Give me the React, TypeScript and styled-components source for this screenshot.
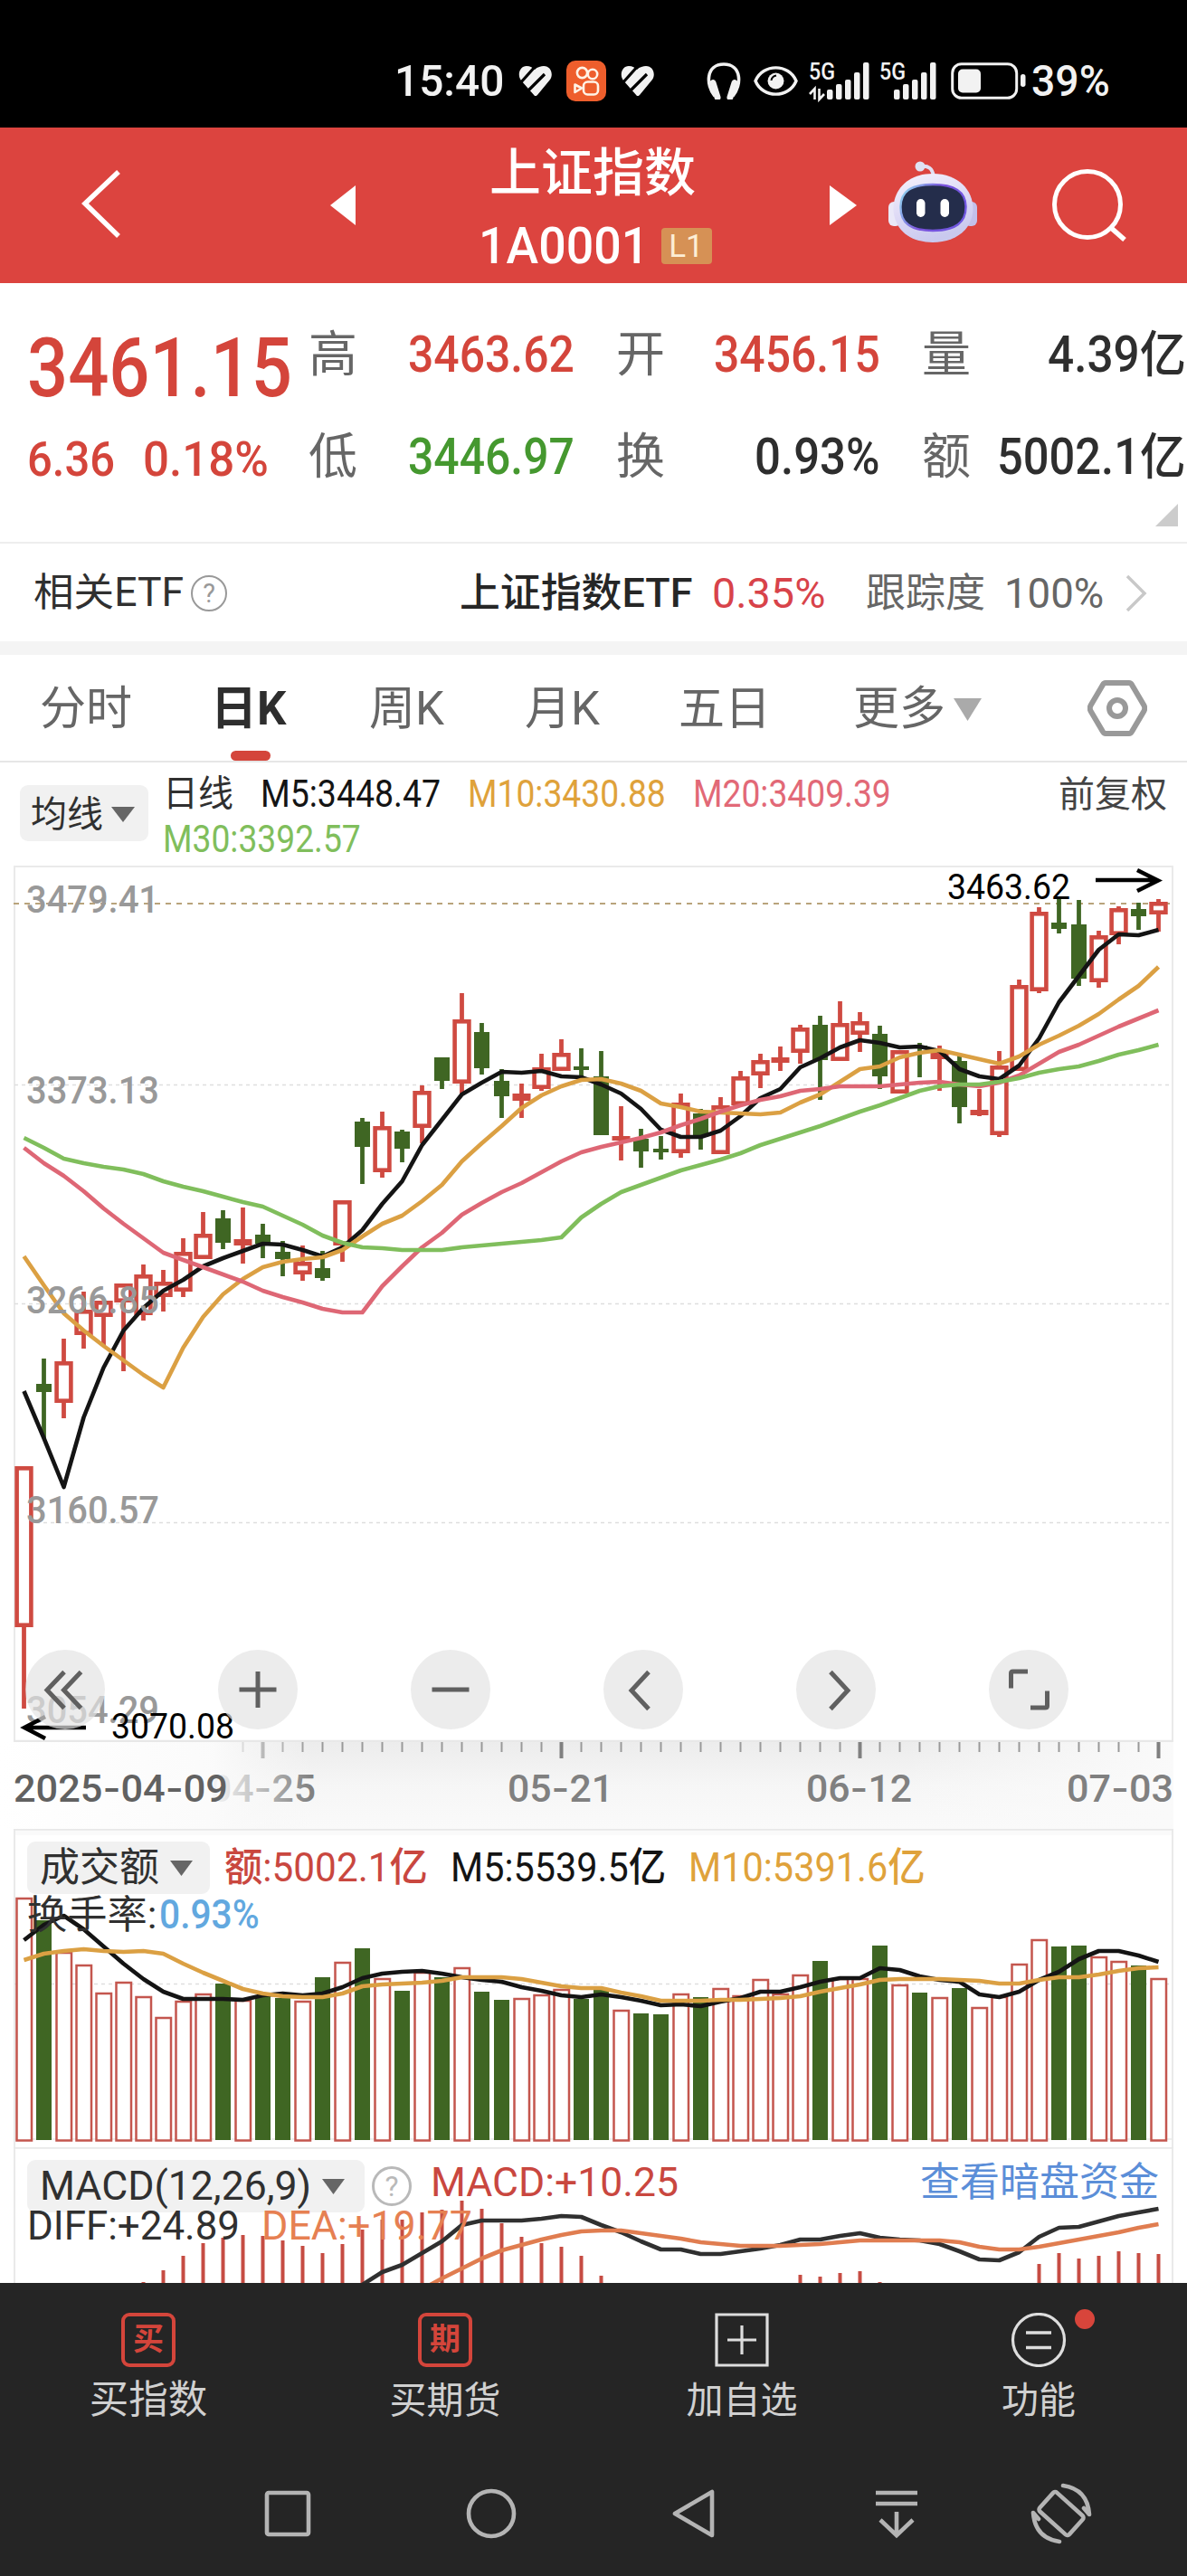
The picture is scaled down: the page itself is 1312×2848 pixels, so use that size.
import React, { useLayoutEffect, useRef, useState } from 'react';
import styled, { createGlobalStyle } from 'styled-components';

const FONT = `Roboto, 'Noto Sans CJK SC', 'Noto Sans', sans-serif`;

const RED = '#d4453b';
const UP = '#cf4a41';
const DOWN = '#3f6623';
const BLACK = '#141414';
const ORANGE = '#dba043';
const PINK = '#de6775';
const GREEN = '#80be5c';

// ---------- text squeezed to a given width ----------

interface FitProps {
  w?: number;
  size: number;
  color?: string;
  weight?: number;
  children: React.ReactNode;
}

const Fit: React.FC<FitProps> = ({ w, size, color, weight, children }) => {
  const ref = useRef<HTMLSpanElement>(null);
  const [scale, setScale] = useState(1);

  useLayoutEffect(() => {
    if (w && ref.current) {
      setScale(w / ref.current.offsetWidth);
    }
  }, [w, children]);

  return (
    <FitBox $w={w} $size={size} $color={color} $weight={weight}>
      <FitInner ref={ref} style={w ? { transform: `scaleX(${scale})` } : undefined}>
        {children}
      </FitInner>
    </FitBox>
  );
};

// ---------- data ----------

const STEP = 22;
const xAt = (i: number) => 26.5 + STEP * i;

// [high, body top, body bottom, low, up?]
const candles: [number, number, number, number, number][] = [
  [1621, 1621, 1799, 1889, 1], [1502, 1530, 1539, 1590, 0], [1480, 1505, 1551, 1568, 1],
  [1428, 1448, 1476, 1491, 1], [1438, 1438, 1456, 1488, 1], [1419, 1419, 1440, 1516, 1],
  [1398, 1409, 1454, 1460, 1], [1404, 1417, 1434, 1450, 1], [1369, 1384, 1428, 1434, 1],
  [1340, 1364, 1392, 1392, 1], [1338, 1347, 1374, 1381, 0], [1335, 1370, 1377, 1397, 1],
  [1353, 1365, 1375, 1391, 0], [1372, 1384, 1392, 1411, 0], [1377, 1395, 1409, 1416, 1],
  [1383, 1402, 1413, 1416, 0], [1327, 1327, 1377, 1395, 1], [1236, 1240, 1268, 1309, 0],
  [1229, 1245, 1296, 1302, 1], [1249, 1251, 1270, 1285, 0], [1200, 1206, 1247, 1264, 1],
  [1169, 1169, 1195, 1204, 0], [1098, 1127, 1198, 1209, 1], [1131, 1141, 1181, 1188, 0],
  [1182, 1195, 1212, 1236, 0], [1198, 1209, 1217, 1236, 1], [1165, 1180, 1204, 1206, 1],
  [1149, 1164, 1184, 1184, 1], [1159, 1179, 1183, 1190, 0], [1162, 1190, 1255, 1255, 0],
  [1223, 1256, 1261, 1283, 1], [1248, 1259, 1273, 1291, 0], [1256, 1270, 1274, 1282, 0],
  [1209, 1219, 1275, 1280, 1], [1226, 1231, 1257, 1271, 0], [1213, 1222, 1276, 1276, 1],
  [1184, 1190, 1222, 1222, 1], [1165, 1172, 1189, 1203, 1], [1157, 1169, 1175, 1184, 1],
  [1133, 1136, 1164, 1176, 1], [1123, 1133, 1172, 1216, 0], [1107, 1131, 1173, 1173, 1],
  [1119, 1129, 1144, 1163, 1], [1134, 1143, 1190, 1204, 0], [1161, 1161, 1209, 1209, 1],
  [1153, 1156, 1159, 1191, 0], [1156, 1164, 1171, 1206, 1], [1167, 1173, 1224, 1242, 0],
  [1204, 1227, 1233, 1234, 1], [1162, 1178, 1255, 1257, 1], [1083, 1089, 1184, 1184, 1],
  [1003, 1008, 1096, 1098, 1], [994, 1020, 1027, 1032, 0], [995, 1022, 1082, 1090, 0],
  [1029, 1034, 1086, 1092, 1], [1002, 1004, 1034, 1044, 1], [998, 1005, 1013, 1028, 0],
  [994, 997, 1011, 1030, 1],
];

const ma5 = [
  1538, 1590, 1644, 1567, 1512, 1471, 1446, 1427, 1415, 1400, 1391, 1383, 1375, 1376, 1382, 1389, 1379, 1360, 1331, 1306,
  1266, 1238, 1210, 1197, 1185, 1186, 1184, 1190, 1191, 1199, 1209, 1226, 1249, 1257, 1257, 1250, 1234, 1214, 1204, 1180,
  1170, 1158, 1150, 1153, 1158, 1157, 1162, 1182, 1190, 1193, 1178, 1148, 1108, 1079, 1050, 1033, 1034, 1028,
];
const ma10 = [
  1389, 1421, 1452, 1471, 1488, 1504, 1520, 1534, 1490, 1456, 1431, 1414, 1401, 1395, 1392, 1390, 1382, 1367, 1353, 1344,
  1328, 1310, 1284, 1264, 1245, 1225, 1211, 1201, 1194, 1193, 1198, 1206, 1220, 1224, 1229, 1230, 1231, 1232, 1230, 1219,
  1210, 1196, 1182, 1179, 1169, 1164, 1161, 1166, 1171, 1176, 1168, 1155, 1145, 1134, 1121, 1105, 1090, 1069,
];
const ma20 = [
  1269, 1286, 1300, 1317, 1336, 1353, 1369, 1385, 1393, 1401, 1409, 1417, 1427, 1434, 1440, 1447, 1451, 1451, 1422, 1400,
  1379, 1363, 1343, 1330, 1318, 1308, 1296, 1284, 1274, 1268, 1263, 1258, 1252, 1244, 1237, 1229, 1222, 1216, 1212, 1206,
  1204, 1201, 1201, 1201, 1199, 1197, 1196, 1199, 1201, 1197, 1189, 1176, 1163, 1155, 1145, 1135, 1126, 1117,
];
const ma30 = [
  1258, 1269, 1281, 1286, 1290, 1293, 1298, 1306, 1312, 1317, 1323, 1329, 1334, 1344, 1354, 1366, 1374, 1379, 1380, 1382,
  1382, 1382, 1379, 1377, 1375, 1373, 1371, 1368, 1346, 1331, 1318, 1310, 1302, 1294, 1288, 1282, 1275, 1266, 1259, 1252,
  1245, 1237, 1229, 1222, 1214, 1206, 1201, 1199, 1199, 1196, 1192, 1186, 1182, 1179, 1173, 1166, 1161, 1155,
];

const volTops = [
  2098, 2123, 2158, 2172, 2203, 2191, 2207, 2230, 2212, 2204, 2193, 2211, 2207, 2209, 2212, 2186, 2169, 2154, 2187, 2201,
  2180, 2186, 2175, 2202, 2211, 2209, 2205, 2199, 2210, 2199, 2222, 2226, 2227, 2204, 2208, 2198, 2206, 2188, 2204, 2183,
  2168, 2187, 2187, 2151, 2194, 2203, 2208, 2198, 2219, 2207, 2171, 2144, 2152, 2151, 2163, 2168, 2173, 2187,
];
const vol5 = [
  2145, 2128, 2118, 2133, 2152, 2171, 2188, 2202, 2210, 2210, 2210, 2211, 2206, 2204, 2206, 2204, 2197, 2187, 2182, 2180,
  2179, 2182, 2186, 2189, 2191, 2197, 2201, 2206, 2208, 2205, 2208, 2212, 2217, 2216, 2218, 2213, 2209, 2202, 2202, 2197,
  2191, 2187, 2187, 2176, 2178, 2185, 2189, 2191, 2205, 2208, 2202, 2189, 2180, 2166, 2157, 2157, 2162, 2169,
];
const vol10 = [
  2167, 2160, 2157, 2155, 2157, 2158, 2157, 2160, 2171, 2181, 2190, 2199, 2204, 2207, 2208, 2208, 2204, 2196, 2194, 2193,
  2192, 2190, 2186, 2186, 2186, 2188, 2192, 2196, 2198, 2198, 2203, 2207, 2212, 2212, 2212, 2211, 2211, 2210, 2209, 2207,
  2202, 2198, 2194, 2189, 2188, 2188, 2188, 2189, 2190, 2193, 2193, 2189, 2186, 2186, 2183, 2179, 2176, 2175,
];

const macdBars: Record<number, number> = {
  6: 2523, 7: 2510, 8: 2494, 9: 2480, 10: 2474, 11: 2471, 12: 2472, 13: 2477, 14: 2483, 15: 2491, 16: 2481, 17: 2465,
  18: 2454, 19: 2454, 20: 2446, 21: 2443, 22: 2433, 23: 2442, 24: 2458, 25: 2473, 26: 2480, 27: 2484, 28: 2494, 29: 2516,
  39: 2515, 40: 2517, 41: 2513, 42: 2511, 43: 2523, 51: 2503, 52: 2491, 53: 2497, 54: 2494, 55: 2489, 56: 2491, 57: 2492,
};
const diff = [
  2526, 2512, 2504, 2491, 2478, 2460, 2455, 2455, 2455, 2453, 2450, 2451, 2460, 2468, 2478, 2487, 2487, 2492, 2492, 2489,
  2486, 2482, 2476, 2476, 2472, 2469, 2474, 2476, 2477, 2481, 2489, 2498, 2499, 2490, 2473, 2463, 2462, 2456, 2450, 2446,
  2442,
];
const dea = [
  2531, 2519, 2508, 2497, 2488, 2482, 2476, 2471, 2467, 2466, 2466, 2469, 2472, 2475, 2479, 2481, 2483, 2483, 2483, 2482,
  2481, 2479, 2477, 2477, 2477, 2477, 2477, 2479, 2484, 2487, 2487, 2484, 2480, 2476, 2472, 2468, 2463, 2459,
];

const toPoints = (ys: number[], from = 0) => ys.map((y, i) => `${xAt(i + from)},${y}`).join(' ');

const Curve = ({ ys, color, from = 0 }: { ys: number[]; color: string; from?: number }) => (
  <polyline points={toPoints(ys, from)} fill="none" stroke={color} strokeWidth="4.600" strokeLinejoin="round" />
);

// ---------- icons ----------

const HeartIcon = () => (
  <svg width="37" height="33" viewBox="0 0 37 33">
    <path d="M18 33 L3 16 C-2 9 2 0 9 0 C13 0 16 2 18 4 C21 1 25 0 28 0 C36 0 39 9 35 15 L21 32 Q19 34 18 33Z" fill="#f2f2f2" />
    <path d="M19 0 L2 19 M29 9 L9 29" stroke="#000" strokeWidth="3.200" />
  </svg>
);

const VideoAppIcon = () => (
  <svg width="44" height="45" viewBox="0 0 44 45">
    <rect width="44" height="45" rx="10" fill="#ee5e2c" />
    <g fill="none" stroke="#fff3e6" strokeWidth="2.6">
      <circle cx="17.5" cy="13.5" r="5.6" />
      <circle cx="29" cy="15" r="5.2" />
      <rect x="19" y="23.5" width="16" height="14" rx="4.5" />
      <path d="M9.5 26.5 L17 30.5 L9.5 35Z" strokeLinejoin="round" />
    </g>
  </svg>
);

const HeadphoneIcon = () => (
  <svg width="38" height="41" viewBox="0 0 38 41">
    <path d="M9 37 C-1 25 -1 2 19 2 C39 2 39 25 29 37" fill="none" stroke="#f2f2f2" strokeWidth="3.6" />
    <path d="M7 24 L12 40 M31 24 L26 40" stroke="#f2f2f2" strokeWidth="7" strokeLinecap="round" transform="translate(0 -1.5)" />
  </svg>
);

const EyeIcon = () => (
  <svg width="49" height="33" viewBox="0 0 49 33">
    <path d="M2 16.500 C10 -3 39 -3 47 16.500 C39 36 10 36 2 16.500Z" fill="none" stroke="#f2f2f2" strokeWidth="3.4" />
    <circle cx="24.500" cy="16.500" r="9" fill="#f2f2f2" />
    <path d="M19.500 16 Q20 11.500 25 10.500" fill="none" stroke="#000" strokeWidth="2" />
  </svg>
);

const SignalIcon = ({ arrows }: { arrows?: boolean }) => {
  const off = arrows ? 19 : 15;
  return (
    <svg width={arrows ? 66 : 62} height="41" viewBox={`0 0 ${arrows ? 66 : 62} 41`} overflow="visible">
      <text x="-1" y="19" fontFamily="Roboto" fontWeight="500" fontSize="26" fill="#f2f2f2" textLength="29" lengthAdjust="spacingAndGlyphs">5G</text>
      {[30, 24, 19, 11, 0].map((t, i) => (
        <rect key={i} x={off + i * 10} y={t} width="6.500" height={41 - t} rx="2" fill="#f2f2f2" />
      ))}
      {arrows && <path d="M0 35 L5.500 29 V41 M16 35 L10.500 41 V29" fill="none" stroke="#f2f2f2" strokeWidth="2.600" />}
    </svg>
  );
};

const BatteryIcon = () => (
  <svg width="83" height="41" viewBox="0 0 83 41">
    <rect x="1.700" y="1.700" width="71" height="37.600" rx="10" fill="none" stroke="#f2f2f2" strokeWidth="3" />
    <rect x="8" y="7.500" width="25" height="26" rx="5" fill="#f2f2f2" />
    <rect x="77" y="13" width="5.500" height="14" rx="2.700" fill="#f2f2f2" />
  </svg>
);

const RobotIcon = () => (
  <svg width="98" height="90" viewBox="0 0 98 90">
    <defs>
      <linearGradient id="shell" x1="0" y1="0" x2="0.4" y2="1">
        <stop offset="0" stopColor="#f6f3fd" />
        <stop offset="0.6" stopColor="#dcd8f5" />
        <stop offset="1" stopColor="#c9c9ee" />
      </linearGradient>
      <linearGradient id="glow" x1="0" y1="0.2" x2="1" y2="0.6">
        <stop offset="0" stopColor="#8fd0ee" />
        <stop offset="0.5" stopColor="#7a52dc" />
        <stop offset="1" stopColor="#6f57e0" />
      </linearGradient>
    </defs>
    <path d="M36 6 Q48 4 50 17" fill="none" stroke="#e2e0f3" strokeWidth="4" />
    <circle cx="35" cy="6" r="5.500" fill="#dfe3f4" />
    <rect x="0" y="45" width="14" height="27" rx="6" fill="#eae8f8" />
    <rect x="84" y="45" width="14" height="27" rx="6" fill="#c3c0ea" />
    <path d="M49 14 C78 14 94 33 93.500 54 C92 78 72 90 49 90 C26 90 7 78 5.500 54 C5 33 20 14 49 14Z" fill="url(#shell)" />
    <path d="M49 26 C74 26 85 34 85.500 50 C86 68 74 77 49 77 C24 77 13 68 13.500 50 C14 34 24 26 49 26Z" fill="#242d4b" stroke="url(#glow)" strokeWidth="2.400" />
    <rect x="31" y="42" width="9.500" height="20" rx="4.700" fill="#fff" />
    <rect x="57.500" y="42" width="9.500" height="20" rx="4.700" fill="#fff" />
  </svg>
);

const SearchIcon = () => (
  <svg width="84" height="80" viewBox="0 0 84 80">
    <circle cx="39" cy="39" r="36.500" fill="none" stroke="#fff" strokeWidth="5" />
    <path d="M64 64 L80 78" stroke="#fff" strokeWidth="5.500" />
  </svg>
);

const HelpIcon = ({ r, color, stroke }: { r: number; color: string; stroke: number }) => (
  <svg width={r * 2} height={r * 2} viewBox={`0 0 ${r * 2} ${r * 2}`}>
    <circle cx={r} cy={r} r={r - stroke / 2} fill="none" stroke={color} strokeWidth={stroke} />
    <text x={r} y={r * 1.5} textAnchor="middle" fontFamily="Roboto" fontSize={r * 1.45} fill={color}>?</text>
  </svg>
);

const Caret = ({ w, h, color }: { w: number; h: number; color: string }) => (
  <svg width={w} height={h} viewBox="0 0 10 10" preserveAspectRatio="none">
    <path d="M0 0 H10 L5 10Z" fill={color} />
  </svg>
);

const HexIcon = () => (
  <svg width="66" height="64" viewBox="0 0 66 64">
    <path d="M20 4 H46 Q48 4 49 6 L62.500 29 Q64 32 62.500 35 L49 58 Q48 60 46 60 H20 Q18 60 17 58 L3.500 35 Q2 32 3.500 29 L17 6 Q18 4 20 4Z" fill="none" stroke="#999" strokeWidth="6" />
    <circle cx="33" cy="32" r="9" fill="none" stroke="#999" strokeWidth="6" />
  </svg>
);

const ToolIcon = ({ d }: { d: string }) => (
  <svg width="88" height="88" viewBox="0 0 88 88">
    <path d={d} fill="none" stroke="#606060" strokeWidth="5" />
  </svg>
);

const toolIcons = [
  'M43 24.500 L24 44.500 L43 64.500 M61.500 24.500 L42.500 44.500 L61.500 64.500',
  'M44 24 V64 M23.500 44 H64.500',
  'M23.500 44 H64.500',
  'M50 24.500 L31 45 L50 65.500',
  'M38 24.500 L57 45 L38 65.500',
  'M24.500 42.500 V26 Q24.500 24 26.500 24 H43 M46 64 H62 Q64.500 64 64.500 62 V45.500',
];

// ---------- chart blocks ----------

const priceLabels: [number, string][] = [
  [1009, '3479.41'], [1220, '3373.13'], [1452, '3266.85'], [1684, '3160.57'], [1905, '3054.29'],
];

const CandleChart = () => (
  <svg width="1312" height="969" viewBox="0 957 1312 969" fontFamily={FONT}>
    <path d="M16 1926 V958 H1296 V1926" fill="none" stroke="#eaeaea" strokeWidth="2" />
    <path d="M15 1925 H1297" stroke="#e8e8e8" strokeWidth="2.500" />
    {[1199.5, 1441.5, 1683.5].map((y) => (
      <path key={y} d={`M16 ${y} H1296`} stroke="#dedede" strokeWidth="1.300" strokeDasharray="4 4" />
    ))}
    <path d="M15 999 H1296" stroke="#b9a47c" strokeWidth="2" strokeDasharray="6 6" />
    {candles.map(([hi, top, bot, lo, up], i) => {
      const x = xAt(i);
      const hollow = up && bot - top > 9;
      return (
        <g key={i} fill={up ? UP : DOWN}>
          {hi < top && <rect x={x - 2.4} y={hi} width="4.800" height={top - hi + 1} />}
          {lo > bot && <rect x={x - 2.4} y={bot - 1} width="4.800" height={lo - bot + 1} />}
          {hollow ? (
            <rect x={x - 7.9} y={top + 2.3} width="15.800" height={bot - top - 4.6} fill="#fff" stroke={UP} strokeWidth="4.600" />
          ) : (
            <rect x={x - (up ? 10 : 8.5)} y={top} width={up ? 20 : 17} height={bot - top} />
          )}
        </g>
      );
    })}
    <Curve ys={ma5} color={BLACK} />
    <Curve ys={ma10} color={ORANGE} />
    <Curve ys={ma20} color={PINK} />
    <Curve ys={ma30} color={GREEN} />
    {priceLabels.map(([y, t]) => (
      <text key={t} x="29" y={y} fontSize="43" fontWeight="500" fill="#999" textLength="147" lengthAdjust="spacingAndGlyphs">{t}</text>
    ))}
    <text x="1047" y="994" fontSize="38" textLength="136" lengthAdjust="spacingAndGlyphs">3463.62</text>
    <path d="M1211 973 H1279 M1257 962 L1280 973.500 L1257 985" fill="none" stroke="#000" strokeWidth="4.500" />
    <text x="123" y="1922" fontSize="38" textLength="136" lengthAdjust="spacingAndGlyphs">3070.08</text>
    <path d="M95 1910 H28 M50 1898 L27 1910 L50 1922" fill="none" stroke="#000" strokeWidth="4.500" />
  </svg>
);

// Roboto's hyphen is short, Inter's sits closer to the digit width
const AxisDate = ({ x, w, color, children }: { x: number; w: number; color: string; children: string }) => (
  <text x={x} y="65.500" fontSize="43" fontWeight="500" fill={color} textLength={w} lengthAdjust="spacingAndGlyphs">
    {children.split(/(-)/).map((p, i) => (
      <tspan key={i} fontFamily={p === '-' ? 'Inter' : 'Roboto'}>{p}</tspan>
    ))}
  </text>
);

const TimeAxis = () => (
  <svg width="1312" height="96" viewBox="0 0 1312 96">
    <defs>
      <linearGradient id="axisBg" x1="0" y1="0" x2="0" y2="1">
        <stop offset="0" stopColor="#ececec" />
        <stop offset="0.5" stopColor="#f6f6f6" />
        <stop offset="1" stopColor="#fafafa" />
      </linearGradient>
      <linearGradient id="axisFade" x1="0" y1="0" x2="1" y2="0">
        <stop offset="0" stopColor="#fff" />
        <stop offset="0.68" stopColor="#fbfbfb" stopOpacity="0.97" />
        <stop offset="1" stopColor="#f6f6f6" stopOpacity="0" />
      </linearGradient>
      <linearGradient id="axisRight" x1="0" y1="0" x2="1" y2="0">
        <stop offset="0" stopColor="#fafafa" stopOpacity="0" />
        <stop offset="1" stopColor="#fafafa" />
      </linearGradient>
    </defs>
    <rect x="15" y="0" width="1282" height="96" fill="url(#axisBg)" />
    <rect x="1000" y="0" width="297" height="96" fill="url(#axisRight)" />
    {candles.map((_, i) => {
      if (i < 11) return null;
      const major = i % 15 === 12;
      return major ? (
        <rect key={i} x={xAt(i) - 2} y="0" width="4" height="18" fill="#808080" />
      ) : (
        <rect key={i} x={xAt(i) - 1} y="0" width="2" height="11" fill="#999" />
      );
    })}
    <AxisDate x={232} w={117} color="#808080">04-25</AxisDate>
    <rect x="0" y="0" width="345" height="96" fill="url(#axisFade)" />
    <AxisDate x={561} w={117} color="#808080">05-21</AxisDate>
    <AxisDate x={891} w={117} color="#808080">06-12</AxisDate>
    <AxisDate x={1179} w={118} color="#808080">07-03</AxisDate>
    <AxisDate x={15} w={237} color="#616161">2025-04-09</AxisDate>
  </svg>
);

const VolumeChart = () => (
  <svg width="1312" height="352" viewBox="0 2022 1312 352">
    <rect x="16" y="2022" width="1280" height="7" fill="#fafafa" />
    <path d="M16 2374 V2022 M1296 2022 V2374" stroke="#eaeaea" strokeWidth="2" />
    <path d="M15 2022.500 H1297" stroke="#e8e8e8" strokeWidth="2.500" />
    <path d="M16 2365 H1296" stroke="#eaeaea" strokeWidth="1.500" />
    <path d="M16 2193.500 H1296" stroke="#dedede" strokeWidth="1.300" strokeDasharray="4 4" />
    {volTops.map((y, i) =>
      candles[i][4] ? (
        <rect key={i} x={xAt(i) - 8} y={y + 1} width="16.500" height={2365.5 - y} fill="#fff" stroke="#c4564e" strokeWidth="2.500" />
      ) : (
        <rect key={i} x={xAt(i) - 8.5} y={y} width="17" height={2366 - y} fill={DOWN} />
      )
    )}
    <Curve ys={vol5} color={BLACK} />
    <Curve ys={vol10} color={ORANGE} />
  </svg>
);

const MacdChart = () => (
  <svg width="1312" height="150" viewBox="0 2374 1312 150">
    <path d="M16 2524 V2374 M1296 2374 V2524" stroke="#eaeaea" strokeWidth="2" />
    <path d="M15 2374.500 H1297" stroke="#e8e8e8" strokeWidth="2.500" />
    {Object.entries(macdBars).map(([i, y]) => (
      <rect key={i} x={xAt(+i) - 2} y={y} width="4" height={2524 - y} fill="#c64c43" />
    ))}
    <Curve ys={diff} from={17} color="#303030" />
    <Curve ys={dea} from={20} color="#e07d50" />
  </svg>
);

const sysIcons = [
  <rect key="sq" x="12" y="12" width="46" height="46" rx="2" />,
  <circle key="ci" cx="35" cy="35" r="25" />,
  <path key="tr" d="M55 11 V59 L14 35Z" strokeLinejoin="round" />,
  <path key="dn" d="M12 12 H58 M12 24 H58 M35 33 V58 M17 42 L35 59 L53 42" />,
  <g key="ro">
    <rect x="13" y="21" width="44" height="28" rx="3" transform="rotate(42 35 35)" />
    <path d="M37 4 Q64 8 66 36 L60 29 M33 66 Q6 62 4 34 L10 41" strokeLinecap="round" strokeLinejoin="round" />
  </g>,
];

// ---------- page ----------

export default function App() {
  return (
    <Screen>
      <GlobalStyle />

      <StatusBar>
        <Fit size={49} w={121} weight={500} color="#f2f2f2">15:40</Fit>
        <StatusApps>
          <HeartIcon />
          <VideoAppIcon />
          <HeartIcon />
        </StatusApps>
        <HeadphoneIcon />
        <EyeIcon />
        <SignalIcon arrows />
        <SignalIcon />
        <BatteryIcon />
        <Fit size={49} w={87} weight={500} color="#f2f2f2">39%</Fit>
      </StatusBar>

      <Header>
        <svg width="44" height="78" viewBox="0 0 44 78">
          <path d="M41 2 L4 37 L41 73" fill="none" stroke="#fff" strokeWidth="5.500" />
        </svg>
        <svg width="28" height="44" viewBox="0 0 28 44"><path d="M28 0 V44 L0 22Z" fill="#fff" /></svg>
        <TitleBlock>
          <Fit size={57} weight={500} color="#fff">上证指数</Fit>
          <CodeRow>
            <Fit size={56} w={188} weight={500} color="#fff">1A0001</Fit>
            <Badge>L1</Badge>
          </CodeRow>
        </TitleBlock>
        <svg width="30" height="44" viewBox="0 0 30 44"><path d="M0 0 V44 L30 22Z" fill="#fff" /></svg>
        <RobotIcon />
        <SearchIcon />
      </Header>

      <Quote>
        <BigPrice><Fit size={90} w={293} weight={500} color={RED}>3461.15</Fit></BigPrice>
        <Pair><Fit size={54} color="#666">高</Fit><Fit size={55} w={184} weight={500} color={RED}>3463.62</Fit></Pair>
        <Pair><Fit size={54} color="#666">开</Fit><Fit size={55} w={184} weight={500} color={RED}>3456.15</Fit></Pair>
        <Pair><Fit size={54} color="#666">量</Fit><Fit size={55} w={153} weight={500} color="#2e2e2e">4.39亿</Fit></Pair>
        <Change>
          <Fit size={54} w={97} weight={500} color={RED}>6.36</Fit>
          <Fit size={54} w={139} weight={500} color={RED}>0.18%</Fit>
        </Change>
        <Pair><Fit size={54} color="#666">低</Fit><Fit size={55} w={184} weight={500} color="#45982f">3446.97</Fit></Pair>
        <Pair><Fit size={54} color="#666">换</Fit><Fit size={55} w={139} weight={500} color="#2e2e2e">0.93%</Fit></Pair>
        <Pair><Fit size={54} color="#666">额</Fit><Fit size={55} w={209} weight={500} color="#2e2e2e">5002.1亿</Fit></Pair>
        <Corner />
      </Quote>

      <EtfRow>
        <EtfLeft>
          <Fit size={43.5} w={166} color="#303030">相关ETF</Fit>
          <HelpIcon r={20} color="#999" stroke={2} />
        </EtfLeft>
        <EtfRight>
          <Fit size={44} w={257} weight={500} color="#262626">上证指数ETF</Fit>
          <Fit size={46} w={125} color="#d8434a">0.35%</Fit>
          <Track>
            <Fit size={44} color="#666">跟踪度</Fit>
            <Fit size={46} w={110} color="#666">100%</Fit>
          </Track>
          <svg width="24" height="40" viewBox="0 0 24 40">
            <path d="M2 1 L21 20 L2 39" fill="none" stroke="#c8c8c8" strokeWidth="3.500" />
          </svg>
        </EtfRight>
      </EtfRow>

      <Tabs>
        <Tab>分时</Tab>
        <Tab $active>日K</Tab>
        <Tab>周K</Tab>
        <Tab>月K</Tab>
        <Tab>五日</Tab>
        <Tab>更多<Caret w={31} h={25} color="#aaa" /></Tab>
        <HexIcon />
      </Tabs>

      <MaBar>
        <MaButton>均线<Caret w={26} h={17} color="#666" /></MaButton>
        <MaLegend>
          <Fit size={40} w={78} color="#303030">日线</Fit>
          <Fit size={42} w={199} weight={450} color={BLACK}>M5:3448.47</Fit>
          <Fit size={42} w={219} weight={450} color="#dfa23b">M10:3430.88</Fit>
          <Fit size={42} w={219} weight={450} color="#e26977">M20:3409.39</Fit>
          <Fit size={42} w={219} weight={450} color={GREEN}>M30:3392.57</Fit>
        </MaLegend>
        <Adjust>前复权</Adjust>
      </MaBar>

      <ChartArea>
        <CandleChart />
        <Tools>
          {toolIcons.map((d) => (
            <ToolButton key={d}><ToolIcon d={d} /></ToolButton>
          ))}
        </Tools>
      </ChartArea>
      <TimeAxis />

      <Panel $h={352}>
        <PanelBack><VolumeChart /></PanelBack>
        <PanelHead>
          <PanelButton $w={202}><Fit size={44} color="#303030">成交额</Fit><Caret w={25} h={17} color="#666" /></PanelButton>
          <Values>
            <Fit size={44} w={225} weight={450} color="#c9473f">额:5002.1亿</Fit>
            <Fit size={44} w={238} weight={450} color={BLACK}>M5:5539.5亿</Fit>
            <Fit size={44} w={262} weight={450} color="#dfa23b">M10:5391.6亿</Fit>
          </Values>
        </PanelHead>
        <SubLine $gap={3} $up={2}>
          <Fit size={43} w={143} color="#303030">换手率:</Fit>
          <Fit size={44} w={111} weight={500} color="#62a8df">0.93%</Fit>
        </SubLine>
      </Panel>

      <Panel $h={150}>
        <PanelBack><MacdChart /></PanelBack>
        <PanelHead>
          <PanelButton $w={373}><Fit size={44} w={300} color="#303030">MACD(12,26,9)</Fit><Caret w={25} h={17} color="#666" /></PanelButton>
          <HelpSlot><HelpIcon r={22} color="#b9b9b9" stroke={3} /></HelpSlot>
          <MacdLine>
            <Fit size={45} w={274} weight={450} color="#c9473f">MACD:+10.25</Fit>
            <FundLink>查看暗盘资金</FundLink>
          </MacdLine>
        </PanelHead>
        <SubLine $gap={24} $up={10}>
          <Fit size={45} w={235} weight={450} color="#303030">DIFF:+24.89</Fit>
          <Fit size={45} w={233} weight={450} color="#e68052">DEA:+19.77</Fit>
        </SubLine>
      </Panel>

      <BottomNav>
        <NavItem><BoxedChar>买</BoxedChar><NavLabel $size={43.5}>买指数</NavLabel></NavItem>
        <NavItem><BoxedChar>期</BoxedChar><NavLabel>买期货</NavLabel></NavItem>
        <NavItem>
          <svg width="60" height="60" viewBox="0 0 60 60">
            <path d="M2 2 H58 V58 H2Z M30 14 V46 M14 30 H46" fill="none" stroke="#ddd" strokeWidth="3.200" />
          </svg>
          <NavLabel>加自选</NavLabel>
        </NavItem>
        <NavItem>
          <svg width="62" height="60" viewBox="0 0 62 60">
            <circle cx="31" cy="30" r="28.500" fill="none" stroke="#ddd" strokeWidth="3.200" />
            <path d="M17 22 H45 M17 38.500 H45" stroke="#ddd" strokeWidth="3.600" />
          </svg>
          <Dot />
          <NavLabel>功能</NavLabel>
        </NavItem>
      </BottomNav>

      <SysNav>
        {sysIcons.map((icon, i) => (
          <svg key={i} width="70" height="70" viewBox="0 0 70 70" fill="none" stroke="#b4b4b4" strokeWidth="4.600">{icon}</svg>
        ))}
      </SysNav>
    </Screen>
  );
}

// ---------- styles ----------

const GlobalStyle = createGlobalStyle`
  * { box-sizing: border-box; }
  body { margin: 0; background: #fff; }
  svg { display: block; flex: none; }
`;

const FitBox = styled.span<{ $w?: number; $size: number; $color?: string; $weight?: number }>`
  display: inline-block;
  flex: none;
  width: ${(p) => (p.$w ? `${p.$w}px` : 'auto')};
  font-size: ${(p) => p.$size}px;
  font-weight: ${(p) => p.$weight ?? 400};
  color: ${(p) => p.$color ?? 'inherit'};
  white-space: nowrap;
`;

const FitInner = styled.span`
  display: inline-block;
  transform-origin: left center;
`;

const Screen = styled.div`
  width: 1312px;
  height: 2848px;
  overflow: hidden;
  background: #fff;
  font-family: ${FONT};
  line-height: 50px;
`;

const StatusBar = styled.div`
  height: 141px;
  display: flex;
  align-items: center;
  padding: 38px 0 0 436px;
  background: #000;

  > *:nth-child(3) { margin-left: 58px; }
  > *:nth-child(4) { margin-left: 14px; }
  > *:nth-child(5) { margin-left: 13px; }
  > *:nth-child(6) { margin-left: 12px; }
  > *:nth-child(7) { margin-left: 16px; }
  > *:nth-child(8) { margin-left: 6px; }
`;

const StatusApps = styled.div`
  display: flex;
  align-items: center;
  gap: 16px;
  margin-left: 16px;
`;

const Header = styled.header`
  height: 172px;
  display: flex;
  align-items: center;
  padding-left: 90px;
  background: #dc443f;

  > svg:nth-child(2) { margin-left: 231px; }
  > svg:nth-child(5) { margin: -8px 0 0 35px; }
  > svg:nth-child(6) { margin-left: 83px; }
`;

const TitleBlock = styled.div`
  width: 524px;
  height: 172px;
  padding-top: 11px;
  display: flex;
  flex-direction: column;
  align-items: center;
  line-height: 80px;
`;

const CodeRow = styled.div`
  display: flex;
  align-items: center;
  gap: 14px;
  margin-left: 5px;
`;

const Badge = styled.span`
  width: 56px;
  height: 40px;
  border-radius: 4px;
  background: #d69155;
  color: #fdeed5;
  font-size: 35px;
  line-height: 41px;
  text-align: center;
`;

const Quote = styled.section`
  position: relative;
  height: 288px;
  padding: 23px 0 0 30px;
  display: grid;
  grid-template-columns: 265px 294px 292px 292px;
  grid-template-rows: 113px 113px;
  column-gap: 46px;
  align-items: center;
  border-bottom: 2px solid #eee;
`;

const BigPrice = styled.div`
  display: flex;
  padding-top: 31px;
`;

const Change = styled.div`
  display: flex;
  gap: 31px;
  padding-top: 4px;
`;

const Pair = styled.div`
  display: flex;
  justify-content: space-between;
  align-items: baseline;
`;

const Corner = styled.i`
  position: absolute;
  right: 10px;
  bottom: 17px;
  width: 25px;
  height: 25px;
  background: #ccc;
  clip-path: polygon(100% 0, 100% 100%, 0 100%);
`;

const EtfRow = styled.section`
  height: 108px;
  display: flex;
  align-items: center;
  justify-content: space-between;
  padding: 2px 44px 0 37px;
`;

const EtfLeft = styled.div`
  display: flex;
  align-items: center;
  gap: 8px;
`;

const EtfRight = styled.div`
  display: flex;
  align-items: center;
  gap: 22px;
`;

const Track = styled.div`
  display: flex;
  gap: 21px;
  margin: 0 2px 0 23px;
`;

const Tabs = styled.nav`
  height: 134px;
  display: grid;
  grid-template-columns: 189px 175px 172px 170px 193px 259px auto;
  align-items: center;
  padding-left: 44px;
  border-top: 15px solid #f4f4f4;
  border-bottom: 2px solid #e6e6e6;
`;

const Tab = styled.div<{ $active?: boolean }>`
  position: relative;
  display: flex;
  align-items: center;
  gap: 9px;
  height: 117px;
  padding-top: 3px;
  font-size: 51px;
  font-weight: ${(p) => (p.$active ? 700 : 400)};
  color: ${(p) => (p.$active ? '#2e2e2e' : '#666')};

  ${(p) =>
    p.$active &&
    `&::after {
      content: '';
      position: absolute;
      left: 22px;
      bottom: 0;
      width: 44px;
      height: 11px;
      border-radius: 6px;
      background: ${RED};
    }`}
`;

const MaBar = styled.section`
  height: 114px;
  display: flex;
  padding-left: 22px;
`;

const MaButton = styled.div`
  width: 142px;
  height: 62px;
  margin-top: 25px;
  padding: 3px 0 0 12px;
  display: flex;
  align-items: center;
  gap: 9px;
  border-radius: 9px;
  background: #f1f1f1;
  font-size: 40px;
  color: #303030;
`;

const MaLegend = styled.div`
  width: 960px;
  padding-top: 10px;
  margin-left: 16px;
  display: flex;
  flex-wrap: wrap;
  column-gap: 30px;
  align-content: flex-start;
`;

const Adjust = styled.div`
  margin: 11px 0 0 30px;
  font-size: 40px;
  color: #444;
`;

const ChartArea = styled.section`
  position: relative;
  height: 969px;
`;

const Tools = styled.div`
  position: absolute;
  left: 28px;
  top: 867px;
  display: flex;
  gap: 125px;
`;

const ToolButton = styled.div`
  width: 88px;
  height: 88px;
  border-radius: 50%;
  background: rgba(228, 228, 228, 0.69);
`;

const Panel = styled.section<{ $h: number }>`
  position: relative;
  height: ${(p) => p.$h}px;
  padding: 14px 0 0 30px;
`;

const PanelBack = styled.div`
  position: absolute;
  left: 0;
  top: 0;
`;

const PanelHead = styled.div`
  position: relative;
  height: 58px;
  display: flex;
  align-items: center;
`;

const PanelButton = styled.div<{ $w: number }>`
  width: ${(p) => p.$w}px;
  height: 58px;
  display: flex;
  align-items: center;
  gap: 12px;
  padding-left: 14px;
  border-radius: 9px;
  background: #f1f1f1;
`;

const Values = styled.div`
  display: flex;
  gap: 25px;
  margin-left: 16px;
`;

const SubLine = styled.div<{ $gap: number; $up: number }>`
  position: relative;
  display: flex;
  gap: ${(p) => p.$gap}px;
  margin-top: -${(p) => p.$up}px;
`;

const HelpSlot = styled.div`
  margin: 0 21px 0 8px;
`;

const MacdLine = styled.div`
  display: flex;
  padding-bottom: 9px;
`;

const FundLink = styled.span`
  margin-left: 267px;
  font-size: 44px;
  color: #5b8ed8;
`;

const BottomNav = styled.nav`
  height: 176px;
  padding-top: 33px;
  display: grid;
  grid-template-columns: repeat(4, 1fr);
  background: #252525;
`;

const NavItem = styled.div`
  position: relative;
  display: flex;
  flex-direction: column;
  align-items: center;
`;

const BoxedChar = styled.div`
  width: 60px;
  height: 60px;
  border: 4px solid #d4453b;
  border-radius: 9px;
  color: #d4453b;
  font-size: 34px;
  font-weight: 700;
  line-height: 51px;
  text-align: center;
`;

const NavLabel = styled.div<{ $size?: number }>`
  margin-top: 12px;
  font-size: ${(p) => p.$size ?? 41}px;
  color: #d0d0d0;
`;

const Dot = styled.i`
  position: absolute;
  left: 204px;
  top: -4px;
  width: 22px;
  height: 22px;
  border-radius: 50%;
  background: #d8453b;
`;

const SysNav = styled.nav`
  height: 148px;
  display: grid;
  grid-template-columns: 225px 224px 224px 182px 70px;
  align-items: center;
  padding: 10px 0 0 283px;
  background: #252525;
`;
